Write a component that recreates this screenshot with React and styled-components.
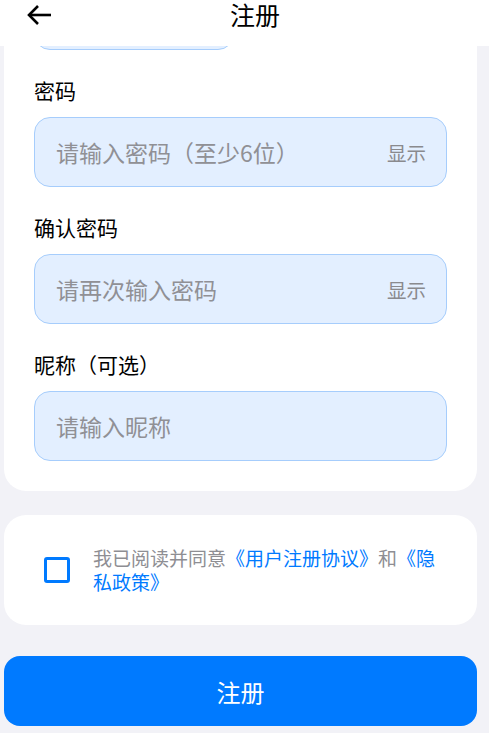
import React, { useLayoutEffect, useRef } from 'react';
import styled, { createGlobalStyle } from 'styled-components';

const GlobalStyle = createGlobalStyle`
  * { box-sizing: border-box; }
  html, body { margin: 0; padding: 0; }
  body {
    background: #f2f2f7;
    font-family: "Noto Sans CJK SC", "Noto Sans", sans-serif;
  }
`;

const Page = styled.div`
  height: 100vh;
  display: flex;
  flex-direction: column;
  background: #f2f2f7;
`;

const Header = styled.header`
  height: 46px;
  flex-shrink: 0;
  background: #fff;
  display: grid;
  grid-template-columns: 60px 1fr 65px;
  align-items: start;
  padding-left: 26px;
`;

const BackButton = styled.button`
  border: none;
  background: none;
  padding: 0;
  margin-top: 3px;
  width: 28px;
  height: 24px;
  display: flex;
  align-items: center;
  cursor: pointer;
`;

const Title = styled.h1`
  margin: 0;
  font-size: 25px;
  font-weight: 400;
  line-height: 29px;
  text-align: center;
  color: #000;
`;

const Scroller = styled.main`
  flex: 1;
  overflow-y: auto;
  scrollbar-width: none;
  padding: 24px 12px 40px 4px;
  display: flex;
  flex-direction: column;
  &::-webkit-scrollbar { display: none; }
`;

const Card = styled.section`
  flex-shrink: 0;
  background: #fff;
  border-radius: 22px;
  padding: ${(p) => p.$pad || '30px'};
  margin-bottom: ${(p) => p.$gap || '24px'};
  display: flex;
  flex-direction: column;
`;

const Field = styled.div`
  display: flex;
  flex-direction: column;
  & + & { margin-top: 26px; }
`;

const Label = styled.label`
  font-size: 21px;
  line-height: 29px;
  color: #000;
  margin-bottom: 12px;
`;

const InputRow = styled.div`
  display: flex;
  gap: 12px;
`;

const InputBox = styled.div`
  flex: ${(p) => (p.$narrow ? '0 0 200px' : '0 0 auto')};
  min-width: 0;
  height: 70px;
  background: #e3efff;
  border: 1.5px solid #a6cdfc;
  border-radius: 16px;
  display: flex;
  align-items: center;
  padding: 0 20px 0 21px;
`;

const Input = styled.input`
  flex: 1;
  width: 0;
  min-width: 0;
  border: none;
  outline: none;
  background: transparent;
  padding: 0;
  font-family: inherit;
  font-size: 23px;
  color: #000;
  &::placeholder { color: #909095; }
`;

const ToggleButton = styled.button`
  border: none;
  background: none;
  padding: 0;
  font-family: inherit;
  font-size: 19.5px;
  color: #8a8a8e;
  cursor: pointer;
`;

const CodeButton = styled.button`
  flex: 1;
  align-self: center;
  height: 44px;
  border: none;
  border-radius: 14px;
  background: #007aff;
  color: #fff;
  font-family: inherit;
  font-size: 18px;
`;

const Agree = styled.div`
  display: flex;
  align-items: center;
  gap: 23px;
`;

const Checkbox = styled.span`
  flex-shrink: 0;
  width: 26px;
  height: 26px;
  border: 3px solid #007aff;
  border-radius: 3px;
`;

const AgreeText = styled.p`
  margin: 0;
  font-size: 19px;
  line-height: 24px;
  color: #8e8e93;
`;

const Link = styled.a`
  color: #007aff;
  text-decoration: none;
`;

const SubmitButton = styled.button`
  flex-shrink: 0;
  height: 70px;
  border: none;
  border-radius: 16px;
  background: #007aff;
  color: #fff;
  font-family: inherit;
  font-size: 24px;
  cursor: pointer;
`;

const BackArrow = () => (
  <svg width="26" height="22" viewBox="0 0 26 22" fill="none" stroke="#000" strokeWidth="2.6" strokeLinecap="butt">
    <path d="M25 11H3" />
    <path d="M12 2L3 11l9 9" />
  </svg>
);

export default function App() {
  const scrollRef = useRef(null);
  const codeRef = useRef(null);

  useLayoutEffect(() => {
    const s = scrollRef.current;
    const c = codeRef.current;
    if (!s || !c) return;
    s.scrollTop =
      c.getBoundingClientRect().bottom - s.getBoundingClientRect().top - 4;
  }, []);

  return (
    <Page>
      <GlobalStyle />
      <Header>
        <BackButton aria-label="返回">
          <BackArrow />
        </BackButton>
        <Title>注册</Title>
        <span />
      </Header>
      <Scroller ref={scrollRef}>
        <Card>
          <Field>
            <Label>手机号</Label>
            <InputBox>
              <Input placeholder="请输入手机号" />
            </InputBox>
          </Field>
          <Field>
            <Label>验证码</Label>
            <InputRow>
              <InputBox $narrow ref={codeRef}>
                <Input placeholder="验证码" />
              </InputBox>
              <CodeButton>获取验证码</CodeButton>
            </InputRow>
          </Field>
          <Field>
            <Label>密码</Label>
            <InputBox>
              <Input type="password" placeholder="请输入密码（至少6位）" />
              <ToggleButton>显示</ToggleButton>
            </InputBox>
          </Field>
          <Field>
            <Label>确认密码</Label>
            <InputBox>
              <Input type="password" placeholder="请再次输入密码" />
              <ToggleButton>显示</ToggleButton>
            </InputBox>
          </Field>
          <Field>
            <Label>昵称（可选）</Label>
            <InputBox>
              <Input placeholder="请输入昵称" />
            </InputBox>
          </Field>
        </Card>

        <Card $pad="31px 30px 31px 40px" $gap="31px">
          <Agree>
            <Checkbox />
            <AgreeText>
              我已阅读并同意<Link>《用户注册协议》</Link>和<Link>《隐私政策》</Link>
            </AgreeText>
          </Agree>
        </Card>

        <SubmitButton>注册</SubmitButton>
      </Scroller>
    </Page>
  );
}
